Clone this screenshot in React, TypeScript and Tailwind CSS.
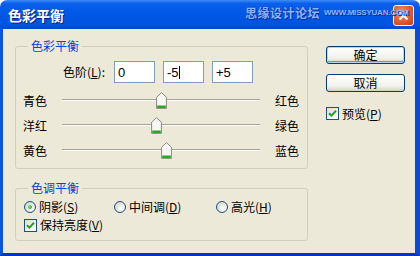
import React from 'react';

const cjk = "font-['Noto_Sans_CJK_SC',sans-serif]";

const Radio: React.FC<{ checked?: boolean }> = ({ checked }) => (
  <span className="relative inline-block w-[12px] h-[12px] rounded-full border border-[#1c5180] bg-[radial-gradient(circle_at_65%_65%,#ffffff_0%,#e8e8e2_45%,#c9c9c0_100%)]">
    {checked && (
      <span className="absolute left-[3px] top-[3px] w-[4px] h-[4px] rounded-full bg-[radial-gradient(circle_at_35%_35%,#7be37b,#1a9a1a)]" />
    )}
  </span>
);

const Check: React.FC = () => (
  <span className="inline-flex items-center justify-center w-[13px] h-[13px] border border-[#1c5180] bg-[linear-gradient(135deg,#dcdcd7_0%,#ffffff_100%)]">
    <svg width="9" height="9" viewBox="0 0 9 9" className="block">
      <path d="M1 4.2 L3.4 6.6 L8 1.8" fill="none" stroke="#21a121" strokeWidth="2" />
    </svg>
  </span>
);

const Thumb: React.FC = () => (
  <svg width="11" height="17" viewBox="0 0 11 17" className="block">
    <path d="M5.5 0.7 L10.4 5.2 L10.4 16.4 L0.6 16.4 L0.6 5.2 Z" fill="#f7f7f3" stroke="#8c8c82" />
    <rect x="1.2" y="13.5" width="8.6" height="2.5" fill="#2aa52a" />
  </svg>
);

const Slider: React.FC<{ left: string; right: string; value: number }> = ({ left, right, value }) => (
  <div className="flex items-center h-[25px] pl-[7px]">
    <span className="w-[39px]">{left}</span>
    <div className="relative w-[198px] h-[25px]">
      <div className="absolute left-0 right-0 top-[11px] h-[1px] bg-[#a3a398]" />
      <div className="absolute left-0 right-0 top-[12px] h-[1px] bg-white" />
      <div className="absolute top-[4px]" style={{ left: 94 + value }}>
        <Thumb />
      </div>
    </div>
    <span className="ml-[15px]">{right}</span>
  </div>
);

const Field: React.FC<{ value: string; caret?: boolean }> = ({ value, caret }) => (
  <div className="flex items-center w-[41px] h-[22px] border border-[#7f9db9] bg-white pl-[3px] font-['Liberation_Sans',sans-serif] text-[13px] text-black">
    {value}
    {caret && <span className="w-[1px] h-[13px] bg-black" />}
  </div>
);

export default function App() {
  return (
    <div className={`w-[420px] h-[256px] flex flex-col text-[12px] leading-none text-black ${cjk}`}>
      {/* title bar */}
      <div className="relative h-[29px] shrink-0 rounded-t-[7px] bg-[linear-gradient(to_bottom,#3d8cf6_0%,#0a60ec_12%,#0057e6_50%,#0052e0_85%,#0047cc_100%)] flex items-center pl-[8px]">
        <span className="text-white font-bold text-[14px] [text-shadow:1px_1px_0_#0a1a80]">色彩平衡</span>
        <div className="absolute left-[393px] top-[5px] w-[21px] h-[21px] rounded-[3px] border border-white bg-[radial-gradient(circle_at_40%_35%,#f09a7a_0%,#e0592f_55%,#c43d18_100%)] flex items-center justify-center">
          <svg width="11" height="11" viewBox="0 0 11 11" className="block">
            <path d="M1.5 1.5 L9.5 9.5 M9.5 1.5 L1.5 9.5" stroke="white" strokeWidth="2.2" />
          </svg>
        </div>
        {/* watermark drawn over the close button */}
        <div className="absolute left-[245px] top-[7px] flex items-center gap-[4px] whitespace-nowrap">
          <span className="text-[12px] font-bold tracking-[0.5px] text-[#8ab6ff] [text-shadow:0_0_1px_#0a2a9a,1px_1px_0_#0a2a9a]">思缘设计论坛</span>
          <span className="font-['Liberation_Sans',sans-serif] text-[8px] font-bold tracking-[-0.2px] text-[#8ab6ff] [text-shadow:1px_1px_0_#0a2a9a]">WWW.MISSYUAN.COM</span>
        </div>
      </div>

      {/* body */}
      <div className="flex-1 flex bg-[#ece9d8] border-l-[3px] border-r-[5px] border-b-[3px] border-l-[#0a55e0] border-r-[#0a4ad4] border-b-[#0835c0]">
        <div className="pl-[12px] pt-[9px] flex flex-col gap-[11px]">
          <fieldset className="w-[293px] h-[131px] border border-[#d0d0bf] rounded-[3px]">
            <legend className="ml-[12px] px-[3px] leading-[16px] text-[#0046d5]">色彩平衡</legend>
            <div className="flex items-center pl-[47px] pt-[7px] gap-[5px]">
              <span className="w-[46px]">色阶(<span className="underline">L</span>):</span>
              <Field value="0" />
              <div className="ml-[3px]"><Field value="-5" caret /></div>
              <div className="ml-[3px]"><Field value="+5" /></div>
            </div>
            <div className="mt-[5px]">
              <Slider left="青色" right="红色" value={0} />
              <Slider left="洋红" right="绿色" value={-5} />
              <Slider left="黄色" right="蓝色" value={5} />
            </div>
          </fieldset>

          <fieldset className="w-[293px] h-[61px] border border-[#d0d0bf] rounded-[3px]">
            <legend className="ml-[12px] px-[3px] leading-[16px] text-[#0046d5]">色调平衡</legend>
            <div className="flex items-center h-[18px] mt-[2px] pl-[8px]">
              <div className="w-[90px] flex items-center gap-[3px]">
                <Radio checked />
                <span>阴影(<span className="underline">S</span>)</span>
              </div>
              <div className="w-[102px] flex items-center gap-[3px]">
                <Radio />
                <span>中间调(<span className="underline">D</span>)</span>
              </div>
              <div className="flex items-center gap-[3px]">
                <Radio />
                <span>高光(<span className="underline">H</span>)</span>
              </div>
            </div>
            <div className="flex items-center h-[18px] pl-[8px] gap-[3px]">
              <Check />
              <span>保持亮度(<span className="underline">V</span>)</span>
            </div>
          </fieldset>
        </div>

        <div className="ml-[18px] pt-[17px] flex flex-col">
          <div className="w-[79px] h-[18px] rounded-[3px] border border-[#003c74] bg-[linear-gradient(to_bottom,#ffffff_0%,#f1f1ec_70%,#d6d0c5_100%)] shadow-[inset_0_0_0_1px_#b9d1f7,inset_0_-1px_0_1px_#6d8ef0] flex items-center justify-center">
            确定
          </div>
          <div className="mt-[10px] w-[79px] h-[18px] rounded-[3px] border border-[#003c74] bg-[linear-gradient(to_bottom,#ffffff_0%,#f1f1ec_70%,#d6d0c5_100%)] flex items-center justify-center">
            取消
          </div>
          <div className="mt-[15px] flex items-center gap-[3px]">
            <Check />
            <span>预览(<span className="underline">P</span>)</span>
          </div>
        </div>
      </div>
    </div>
  );
}
